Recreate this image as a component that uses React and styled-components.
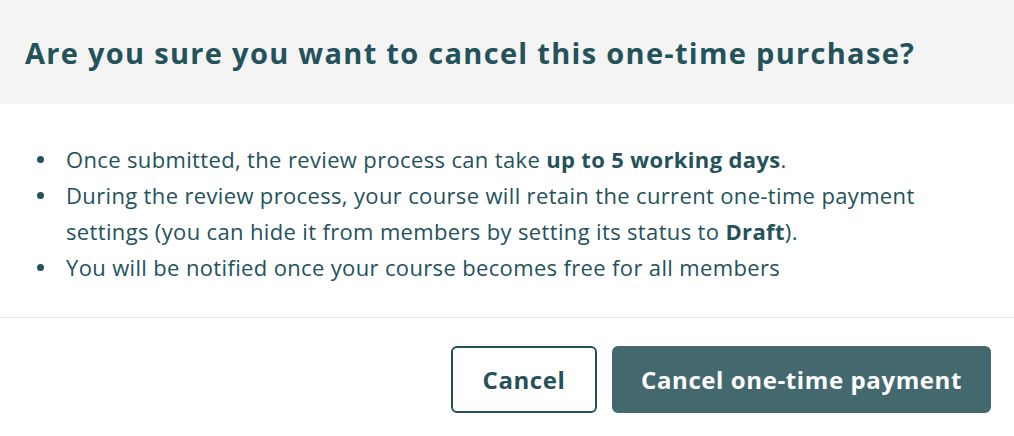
import React from "react";
import styled, { createGlobalStyle } from "styled-components";

const Global = createGlobalStyle`
  html, body { margin: 0; padding: 0; background: #ffffff; }
  body { font-family: "Open Sans", "Inter", sans-serif; color: #24525b; }
`;

const Modal = styled.div`
  width: 1014px;
  background: #ffffff;
`;

const Header = styled.header`
  height: 104px;
  box-sizing: border-box;
  background: #f4f4f4;
  display: flex;
  align-items: center;
  padding: 0 25px;
`;

const Title = styled.h2`
  margin: 0;
  font-size: 29px;
  font-weight: 700;
  color: #24525b;
  letter-spacing: 1.3px;
  white-space: nowrap;
`;

const Body = styled.div`
  padding: 37px 60px 32px 25px;
`;

const List = styled.ul`
  margin: 0;
  padding: 0;
  list-style: none;
`;

const Item = styled.li`
  position: relative;
  font-size: 22px;
  line-height: 36px;
  letter-spacing: 0.35px;
  color: #24525b;
  padding-left: 41px;
  &::before {
    content: "";
    position: absolute;
    left: 12px;
    top: 14.5px;
    width: 7px;
    height: 7px;
    border-radius: 50%;
    background: #24525b;
  }
`;

const Strong = styled.strong`
  font-weight: 700;
`;

const Footer = styled.footer`
  border-top: 1px solid #e5e7e7;
  display: flex;
  justify-content: flex-end;
  gap: 15px;
  padding: 28px 23px 23px;
`;

const Button = styled.button`
  height: 67px;
  box-sizing: border-box;
  border-radius: 6px;
  font-family: inherit;
  font-size: 24px;
  font-weight: 700;
  letter-spacing: 0.6px;
  padding: 0 ${(p) => (p.$primary ? "27px" : "29.5px")};
  cursor: pointer;
  border: 2px solid ${(p) => (p.$primary ? "#43696f" : "#24525b")};
  background: ${(p) => (p.$primary ? "#43696f" : "#ffffff")};
  color: ${(p) => (p.$primary ? "#ffffff" : "#24525b")};
`;

export default function App() {
  return (
    <>
      <Global />
      <Modal>
        <Header>
          <Title>Are you sure you want to cancel this one-time purchase?</Title>
        </Header>
        <Body>
          <List>
            <Item>
              Once submitted, the review process can take <Strong>up to 5 working days</Strong>.
            </Item>
            <Item>
              During the review process, your course will retain the current one-time payment
              settings (you can hide it from members by setting its status to <Strong>Draft</Strong>).
            </Item>
            <Item>You will be notified once your course becomes free for all members</Item>
          </List>
        </Body>
        <Footer>
          <Button>Cancel</Button>
          <Button $primary>Cancel one-time payment</Button>
        </Footer>
      </Modal>
    </>
  );
}
